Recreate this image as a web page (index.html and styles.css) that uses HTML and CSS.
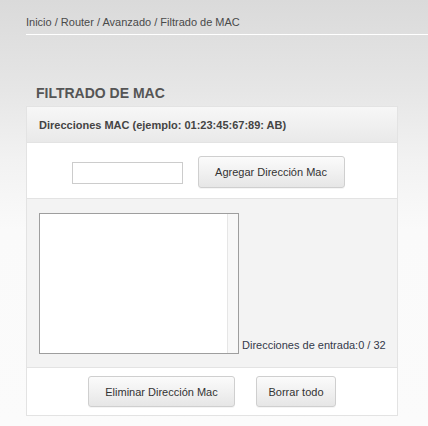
FILE: index.html
```html
<!DOCTYPE html>
<html>
<head>
<meta charset="utf-8">
<link rel="stylesheet" href="styles.css">
</head>
<body>
<div class="page">
  <div class="breadcrumb">Inicio / Router / Avanzado / Filtrado de MAC</div>
  <h1 class="title">FILTRADO DE MAC</h1>
  <div class="panel">
    <div class="panel-head">Direcciones MAC (ejemplo: 01:23:45:67:89: AB)</div>
    <div class="row add-row">
      <input class="mac-input" type="text">
      <button class="btn btn-add">Agregar Dirección Mac</button>
    </div>
    <div class="row list-row">
      <div class="list-box"><div class="scroll-track"></div></div>
      <span class="count">Direcciones de entrada:0 / 32</span>
    </div>
    <div class="row actions-row">
      <button class="btn btn-del">Eliminar Dirección Mac</button>
      <button class="btn btn-clear">Borrar todo</button>
    </div>
  </div>
</div>
</body>
</html>
```
FILE: styles.css
```css
html, body {
  margin: 0;
  padding: 0;
  height: 100%;
}
body {
  background: linear-gradient(to bottom, #dadada 0px, #e6e6e6 90px, #f2f2f2 160px, #fafafa 230px, #fbfbfb 426px);
  font-family: "Liberation Sans", Arial, sans-serif;
  color: #444;
}
.page {
  padding-top: 16px;
}
.breadcrumb {
  margin-left: 26px;
  font-size: 11px;
  color: #4a4a4a;
  line-height: 13px;
  padding-bottom: 5px;
  border-bottom: 1px solid #ffffff;
}
.title {
  margin: 50px 0 0 36px;
  font-size: 14px;
  font-weight: bold;
  color: #555;
  line-height: 16px;
  height: 21px;
}
.panel {
  margin-left: 26px;
  width: 370px;
  border: 1px solid #e3e3e3;
  background: #fff;
}
.panel-head {
  height: 35px;
  line-height: 36px;
  padding-left: 12px;
  font-size: 11px;
  font-weight: bold;
  color: #444;
  background: linear-gradient(to bottom, #f7f7f7, #e9e9e9);
}
.row {
  display: flex;
  border-top: 1px solid #e3e3e3;
}
.add-row {
  height: 55px;
  background: #fff;
  align-items: center;
  justify-content: center;
  gap: 15px;
  padding-right: 8px;
}
.mac-input {
  width: 111px;
  height: 22px;
  box-sizing: border-box;
  border: 1px solid #cccccc;
  margin: 4px 0 0 0;
  padding: 0;
  background: #fff;
}
.btn {
  font-family: "Liberation Sans", Arial, sans-serif;
  font-size: 11px;
  color: #333;
  height: 32px;
  border: 1px solid #cfcfcf;
  border-radius: 3px;
  background: linear-gradient(to bottom, #fbfbfb 0%, #f2f2f2 45%, #e6e6e6 100%);
  box-shadow: 0 1px 0 rgba(0,0,0,0.04);
  padding: 0;
  margin: 0;
}
.btn-add {
  width: 147px;
  margin-top: 3px;
}
.list-row {
  height: 169px;
  background: #f3f3f3;
  padding: 14px 0 0 12px;
  box-sizing: border-box;
  align-items: flex-start;
}
.list-box {
  width: 200px;
  height: 141px;
  box-sizing: border-box;
  border: 1px solid #9e9e9e;
  background: #fff;
  display: flex;
  justify-content: flex-end;
}
.scroll-track {
  width: 10px;
  height: 100%;
  background: #f8f8f8;
  border-left: 1px solid #e6e6e6;
}
.count {
  align-self: flex-start;
  margin-top: 126px;
  margin-left: 3px;
  font-size: 11px;
  color: #33394a;
  line-height: 13px;
}
.actions-row {
  height: 48px;
  background: #fff;
  align-items: flex-start;
  justify-content: center;
  gap: 21px;
  padding-top: 8px;
  box-sizing: border-box;
}
.btn-del {
  width: 147px;
  height: 31px;
}
.btn-clear {
  width: 80px;
  height: 31px;
}
```
